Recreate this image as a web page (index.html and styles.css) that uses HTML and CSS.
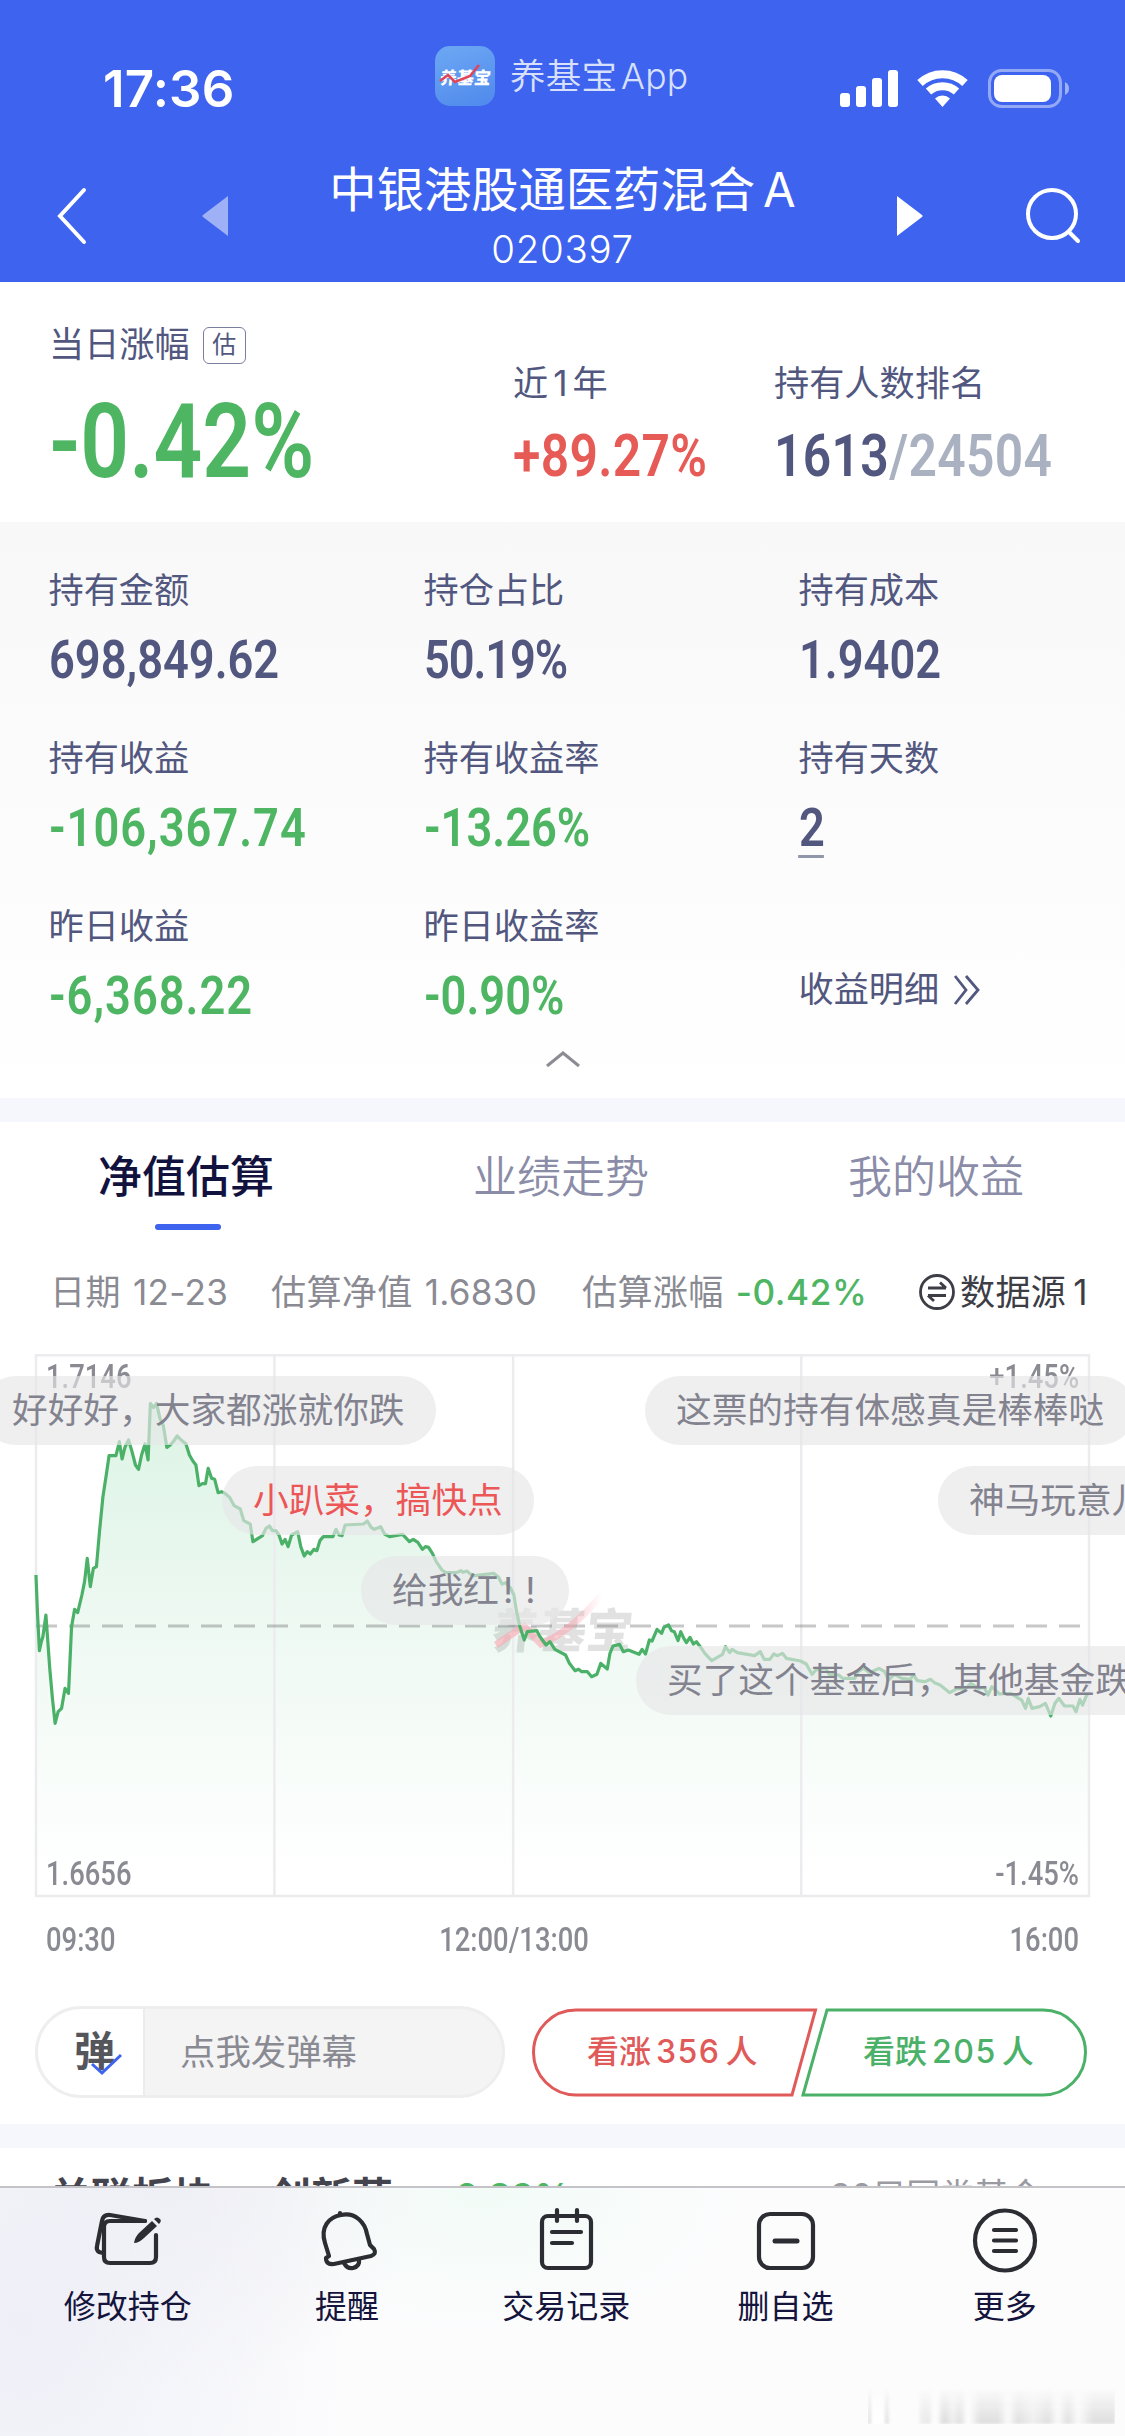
FILE: index.html
```html
<!DOCTYPE html>
<html lang="zh-CN">
<head>
<meta charset="utf-8">
<title>中银港股通医药混合A</title>
<link rel="stylesheet" href="styles.css">
</head>
<body>
<div class="app">
  <header class="header">
    <div class="status">
      <div class="time">17:36</div>
      <div class="brand">
        <div class="logo"><span>养基宝</span>
          <svg viewBox="0 0 60 60"><path d="M5 35 L13 29 L20 36 L35 30 L44 19" fill="none" stroke="#e0455a" stroke-width="2.6"/></svg>
        </div>
        <span class="brand-name">养基宝<i>App</i></span>
      </div>
      <svg class="signals" viewBox="0 0 230 40">
        <g fill="#fff"><rect x="0" y="24" width="10" height="14" rx="3"/><rect x="16" y="17" width="10" height="21" rx="3"/><rect x="32" y="9" width="10" height="29" rx="3"/><rect x="48" y="1" width="10" height="37" rx="3"/></g>
        <g fill="none" stroke="#fff" stroke-width="8"><path d="M80 14 A33 33 0 0 1 125 14"/><path d="M88.500 22.500 A21 21 0 0 1 116.500 22.500"/></g>
        <path d="M95 29.500 A11 11 0 0 1 110 29.500 L102.500 38 Z" fill="#fff"/>
        <rect x="149.500" y="1.500" width="71" height="36" rx="12" fill="none" stroke="#fff" stroke-opacity=".45" stroke-width="3"/>
        <rect x="154" y="6" width="57" height="27" rx="8" fill="#fff"/>
        <path d="M225 13 q4 2 4 6.500 q0 4.500 -4 6.500z" fill="#fff" fill-opacity=".5"/>
      </svg>
    </div>
    <div class="nav">
      <svg class="back" viewBox="0 0 34 58"><path d="M29 3 L5 29 L29 55" fill="none" stroke="#fff" stroke-width="4" stroke-linecap="round"/></svg>
      <svg class="prev" viewBox="0 0 28 42"><path d="M27 1 V41 L2 22 Q0.500 21 2 20Z" fill="#fff" opacity=".5"/></svg>
      <div class="title"><h1>中银港股通医药混合<b>A</b></h1><p>020397</p></div>
      <svg class="next" viewBox="0 0 28 42"><path d="M1 1 V41 L26 22 Q27.500 21 26 20Z" fill="#fff"/></svg>
      <svg class="search" viewBox="0 0 58 58"><g fill="none" stroke="#fff" stroke-width="4" stroke-linecap="round"><circle cx="27" cy="26" r="24"/><path d="M44 44 L53 53"/></g></svg>
    </div>
  </header>

  <section class="summary">
    <div class="today">
      <div class="label">当日涨幅<em>估</em></div>
      <div class="num big green">-0.42%</div>
    </div>
    <div class="year">
      <div class="label">近<i class="one">1</i>年</div>
      <div class="num mid red">+89.27%</div>
    </div>
    <div class="rank">
      <div class="label">持有人数排名</div>
      <div class="num mid">1613<span>/24504</span></div>
    </div>
  </section>

  <section class="holding">
    <div class="grid">
      <div><div class="label">持有金额</div><div class="num">698,849.62</div></div>
      <div><div class="label">持仓占比</div><div class="num tight">50.19%</div></div>
      <div><div class="label">持有成本</div><div class="num">1.9402</div></div>
      <div><div class="label">持有收益</div><div class="num wide green">-106,367.74</div></div>
      <div><div class="label">持有收益率</div><div class="num green">-13.26%</div></div>
      <div><div class="label">持有天数</div><div class="num days">2</div></div>
      <div><div class="label">昨日收益</div><div class="num wide green">-6,368.22</div></div>
      <div><div class="label">昨日收益率</div><div class="num green">-0.90%</div></div>
      <div class="detail">收益明细<svg viewBox="0 0 28 32"><path d="M2 2 L13 16 L2 30 M13 2 L25 16 L13 30" fill="none" stroke="#52577f" stroke-width="2.800"/></svg></div>
    </div>
    <svg class="fold" viewBox="0 0 36 20"><path d="M2 17 L18 4 L34 17" fill="none" stroke="#8c8c94" stroke-width="3"/></svg>
  </section>

  <section class="trend">
    <nav class="tabs"><span class="on">净值估算</span><span>业绩走势</span><span>我的收益</span></nav>
    <div class="info">
      <span class="i1">日期 12-23</span><span class="i2">估算净值 1.6830</span><span class="i3">估算涨幅 <b class="green">-0.42%</b></span>
      <span class="source"><svg viewBox="0 0 38 38"><g fill="none" stroke="#3d3d46" stroke-width="2.800"><circle cx="19" cy="19" r="16.500"/><path d="M10 15 H28 M22 9.500 L28 15 M28 22.500 H10 M10 22.500 L16 28"/></g></svg>数据源<i>1</i></span>
    </div>
    <div class="chart">
      <svg class="plot" viewBox="0 0 2940 1680" preserveAspectRatio="none">
        <defs><linearGradient id="area" x1="0" y1="190" x2="0" y2="1600" gradientUnits="userSpaceOnUse"><stop offset="0" stop-color="#dcf4e5"/><stop offset=".5" stop-color="#eff9f3"/><stop offset="1" stop-color="#fff"/></linearGradient></defs>
        <path class="fill" d="M94,1668 L94,705 98,820 103,932 108,905 112,890 120,825 130,985 137,1075 144,1150 152,1115 161,1105 170,1045 179,1060 187,860 195,808 203,818 214,765 221,725 228,655 236,740 244,685 252,680 260,575 269,470 277,410 285,347 303,347 312,305 319,357 327,320 336,300 345,335 354,375 362,388 370,345 379,312 387,360 393,190 401,203 409,190 418,235 427,258 436,322 445,315 454,303 463,288 472,298 486,312 495,345 504,363 512,375 520,437 529,431 537,431 544,385 553,415 561,418 570,458 579,455 588,460 600,472 612,497 628,507 637,542 654,552 661,605 686,587 695,565 704,558 712,572 721,572 729,585 737,612 745,598 753,620 762,585 778,575 786,620 795,648 803,635 811,642 820,628 828,632 836,602 845,590 870,590 878,568 886,585 894,587 902,555 950,552 960,543 970,562 978,568 995,560 1005,582 1018,590 1052,583 1070,605 1080,598 1092,607 1104,628 1112,620 1120,622 1130,640 1140,665 1155,690 1165,698 1195,697 1205,692 1210,697 1220,693 1230,703 1240,707 1290,700 1303,712 1312,732 1322,728 1335,745 1343,765 1350,815 1358,857 1370,900 1378,875 1403,872 1410,888 1427,915 1437,905 1450,928 1478,945 1488,970 1503,992 1512,988 1520,995 1535,995 1546,1010 1560,1003 1570,970 1587,987 1594,940 1602,918 1619,913 1629,935 1642,930 1670,943 1678,928 1687,942 1697,900 1704,903 1717,868 1729,880 1735,862 1747,855 1755,872 1762,875 1772,902 1779,875 1787,895 1794,908 1803,892 1812,912 1820,905 1830,920 1842,940 1860,962 1888,943 1896,920 1907,938 1913,928 1927,938 1972,947 1987,935 1997,958 2012,958 2022,942 2032,947 2045,940 2055,955 2092,963 2107,972 2122,1003 2132,990 2157,985 2167,1003 2192,1005 2202,1015 2234,1015 2242,995 2257,985 2272,998 2297,985 2312,995 2322,1020 2337,1003 2357,1015 2379,1018 2387,1003 2397,1022 2417,1025 2432,1018 2442,1028 2457,1035 2482,1058 2502,1045 2522,1048 2537,1030 2557,1045 2572,1042 2582,1065 2592,1040 2612,1062 2642,1060 2662,1075 2670,1080 2680,1105 2687,1075 2697,1105 2717,1100 2732,1090 2746,1128 2757,1090 2767,1075 2782,1098 2804,1098 2812,1115 2822,1078 2829,1095 2842,1060 L2846,1668 Z" fill="url(#area)"/>
        <g class="axes"><path d="M94,46 H2846 V1668 H94 Z M717,46 V1668 M1341,46 V1668 M2094,46 V1668"/></g>
      </svg>
      <svg class="plot" viewBox="0 0 1125 560"><path d="M36 286 H1082" stroke="#555" stroke-opacity=".32" stroke-width="2.800" stroke-dasharray="21 12"/></svg>
      <div class="watermark">养基宝</div>
      <svg class="plot" viewBox="0 0 1125 560"><defs><linearGradient id="arrow" x1="0" x2="1"><stop offset="0" stop-color="#f9a9b3" stop-opacity=".65"/><stop offset=".7" stop-color="#f9a9b3" stop-opacity=".55"/><stop offset="1" stop-color="#f9a9b3" stop-opacity="0"/></linearGradient></defs><path d="M496 305 L524 286 L541 304 Q570 292 602 255" fill="none" stroke="url(#arrow)" stroke-width="7"/></svg>
      <svg class="plot" viewBox="0 0 2940 1680" preserveAspectRatio="none">
        <path class="line" d="M94,705 L98,820 103,932 108,905 112,890 120,825 130,985 137,1075 144,1150 152,1115 161,1105 170,1045 179,1060 187,860 195,808 203,818 214,765 221,725 228,655 236,740 244,685 252,680 260,575 269,470 277,410 285,347 303,347 312,305 319,357 327,320 336,300 345,335 354,375 362,388 370,345 379,312 387,360 393,190 401,203 409,190 418,235 427,258 436,322 445,315 454,303 463,288 472,298 486,312 495,345 504,363 512,375 520,437 529,431 537,431 544,385 553,415 561,418 570,458 579,455 588,460 600,472 612,497 628,507 637,542 654,552 661,605 686,587 695,565 704,558 712,572 721,572 729,585 737,612 745,598 753,620 762,585 778,575 786,620 795,648 803,635 811,642 820,628 828,632 836,602 845,590 870,590 878,568 886,585 894,587 902,555 950,552 960,543 970,562 978,568 995,560 1005,582 1018,590 1052,583 1070,605 1080,598 1092,607 1104,628 1112,620 1120,622 1130,640 1140,665 1155,690 1165,698 1195,697 1205,692 1210,697 1220,693 1230,703 1240,707 1290,700 1303,712 1312,732 1322,728 1335,745 1343,765 1350,815 1358,857 1370,900 1378,875 1403,872 1410,888 1427,915 1437,905 1450,928 1478,945 1488,970 1503,992 1512,988 1520,995 1535,995 1546,1010 1560,1003 1570,970 1587,987 1594,940 1602,918 1619,913 1629,935 1642,930 1670,943 1678,928 1687,942 1697,900 1704,903 1717,868 1729,880 1735,862 1747,855 1755,872 1762,875 1772,902 1779,875 1787,895 1794,908 1803,892 1812,912 1820,905 1830,920 1842,940 1860,962 1888,943 1896,920 1907,938 1913,928 1927,938 1972,947 1987,935 1997,958 2012,958 2022,942 2032,947 2045,940 2055,955 2092,963 2107,972 2122,1003 2132,990 2157,985 2167,1003 2192,1005 2202,1015 2234,1015 2242,995 2257,985 2272,998 2297,985 2312,995 2322,1020 2337,1003 2357,1015 2379,1018 2387,1003 2397,1022 2417,1025 2432,1018 2442,1028 2457,1035 2482,1058 2502,1045 2522,1048 2537,1030 2557,1045 2572,1042 2582,1065 2592,1040 2612,1062 2642,1060 2662,1075 2670,1080 2680,1105 2687,1075 2697,1105 2717,1100 2732,1090 2746,1128 2757,1090 2767,1075 2782,1098 2804,1098 2812,1115 2822,1078 2829,1095 2842,1060"/>
      </svg>
      <div class="scale"><span class="axis">1.7146</span><span class="axis end">+1.45%</span></div>
      <div class="scale low"><span class="axis">1.6656</span><span class="axis end">-1.45%</span></div>
      <div class="bullet b1">好好好，大家都涨就你跌</div>
      <div class="bullet b2">这票的持有体感真是棒棒哒</div>
      <div class="bullet b3 red">小趴菜，搞快点</div>
      <div class="bullet b4">神马玩意儿</div>
      <div class="bullet b5">给我红<i>!!</i></div>
      <div class="bullet b6">买了这个基金后，其他基金跌</div>
    </div>
    <div class="times"><span class="axis">09:30</span><span class="axis center">12:00/13:00</span><span class="axis end">16:00</span></div>
    <div class="actions">
      <div class="send"><div class="toggle">弹<svg viewBox="0 0 34 24"><path d="M2 12 L12 21 L31 3" fill="none" stroke="#3d63ef" stroke-width="3"/></svg></div><div class="field">点我发弹幕</div></div>
      <div class="vote">
        <svg viewBox="0 0 560 92"><g fill="#fff" stroke-width="3"><path d="M45 3 H284.500 L261 88 H45 A42.500 42.500 0 0 1 45 3Z" stroke="#df5a59"/><path d="M296 3 H512 A42.500 42.500 0 0 1 512 88 H272 Z" stroke="#4bb168"/></g></svg>
        <span class="up">看涨<i>356</i>人</span><span class="down">看跌<i>205</i>人</span>
      </div>
    </div>
  </section>

  <section class="sector"><b>关联板块</b><b class="name">创新药</b><span class="pct green">0.89%</span><span class="more">30只同类基金 ›</span></section>

  <footer class="toolbar">
    <div class="tool"><svg viewBox="0 0 80 70"><g class="ink"><path d="M57 20 H22 Q16 20 16 26 V56 Q16 62 22 62 H62 Q68 62 68 56 V34"/><path d="M15 52 L11 51 Q8 49 9 45 L14 20 Q15 13.500 22 14 L57 20"/></g><path d="M46 42 Q47 36 51 32 L64 20 L69 25 L56 37 Q51 42 46 42Z M66 18 Q69 15 72 18 Q74 20 71 23Z" fill="#2b2d33"/></svg>修改持仓</div>
    <div class="tool"><svg viewBox="0 0 80 70"><g class="ink"><path d="M22 55 L18 42 C13 26 22 16 34 14 C49 11 58 22 60 33 L63 44 L67 48 Q70 53 64 55 L27 63 Q19 64 19 57 Z"/><path d="M37 62 Q40 68 46 67 Q53 65 52 59 M33 13 V12"/></g></svg>提醒</div>
    <div class="tool"><svg viewBox="0 0 80 70"><g class="ink"><rect x="16" y="15" width="49" height="52" rx="6"/><path d="M31 9 V20 M51 9 V20 M26 31 H55 M26 42 H46"/></g></svg>交易记录</div>
    <div class="tool"><svg viewBox="0 0 80 70"><g class="ink"><rect x="13" y="13" width="54" height="54" rx="11"/><path d="M29 40 H51" stroke-width="5"/></g></svg>删自选</div>
    <div class="tool"><svg viewBox="0 0 80 70"><g class="ink"><circle cx="40" cy="39.500" r="30"/><path d="M29 29 H51 M29 39.500 H51 M29 50 H51"/></g></svg>更多</div>
    <div class="smudge"></div>
  </footer>
</div>
</body>
</html>
```
FILE: styles.css
```css
* { box-sizing: border-box; }
body { margin: 0; background: #fff; }
i, em { font-style: normal; }
svg { display: block; overflow: visible; }
.app {
  width: 1125px; height: 2436px; overflow: hidden;
  display: flex; flex-direction: column; position: relative;
  font-family: Inter, "Noto Sans CJK SC", sans-serif;
  color: #52577f; background: #fff;
}
.green { color: #4eb563; }
.red { color: #e75b57; }

/* header */
.header { height: 282px; background: #3d63ef; color: #fff; flex: none; }
.status { height: 150px; display: flex; align-items: flex-start; }
.time { width: 332px; margin: 58px 0 0 103px; font-size: 51px; line-height: 62px; font-weight: 600; letter-spacing: .2px; }
.brand { width: 405px; margin-top: 45px; display: flex; align-items: center; gap: 15px; }
.logo { width: 60px; height: 60px; border-radius: 15px; background: linear-gradient(160deg, #6da8f4, #4f89ec); position: relative; display: flex; align-items: center; justify-content: center; }
.logo span { font-size: 17px; font-weight: 900; white-space: nowrap; transform: skewX(-6deg); }
.logo svg { position: absolute; inset: 0; }
.brand-name { font-size: 35.500px; line-height: 60px; font-weight: 350; color: #d8e0fc; white-space: nowrap; padding-top: 2px; letter-spacing: .2px; }
.brand-name i { margin-left: 4px; }
.signals { width: 230px; height: 40px; margin-top: 69px; }
.nav { height: 132px; display: flex; align-items: flex-start; }
.back { width: 34px; height: 58px; margin: 37px 0 0 55px; }
.prev { width: 28px; height: 42px; margin: 45px 0 0 112px; }
.title { width: 667px; text-align: center; padding-top: 10px; }
.title h1 { margin: 0; font-size: 47.300px; line-height: 60px; font-weight: 400; white-space: nowrap; }
.title h1 b { font-weight: 400; margin-left: 8px; }
.title p { margin: 9px 0 0; font-size: 38.500px; line-height: 40px; font-weight: 350; letter-spacing: .7px; }
.next { width: 28px; height: 42px; margin: 45px 0 0; }
.search { width: 58px; height: 58px; margin: 38px 0 0 101px; }

/* text pieces */
.label { font-size: 35.200px; line-height: 44px; white-space: nowrap; }
.num { font-family: Roboto, sans-serif; font-weight: 600; font-size: 54.500px; line-height: 60px; white-space: nowrap; width: max-content; transform: scaleX(.83); transform-origin: 0 50%; }
.num.wide { letter-spacing: 1.200px; }
.num.tight { letter-spacing: -1.300px; }
.num.mid { font-size: 60px; letter-spacing: .4px; }
.num.big { font-size: 103px; line-height: 110px; }

.summary { height: 240px; display: grid; grid-template-columns: 464px 261px 1fr; padding-left: 49px; flex: none; }
.today { padding-top: 40px; }
.label em { display: inline-block; width: 43px; height: 37px; line-height: 34px; margin-left: 13px; border: 1.500px solid #7a7e9f; border-radius: 6px; font-size: 24px; text-align: center; vertical-align: 4px; }
.today .label { height: 44px; }
.today .num { margin-top: 21px; }
.year, .rank { padding-top: 79px; }
.year .num, .rank .num { margin-top: 21px; }
.one { margin: 0 5px; }
.rank span { color: #aab1c0; }

.holding { height: 576px; background: linear-gradient(#f8f8f8, #fff); flex: none; }
.grid { display: grid; grid-template-columns: 375px 375px 1fr; grid-auto-rows: 168px; padding: 46px 0 0 48.500px; }
.grid .num { margin-top: 17px; }
.grid .days { position: relative; }
.days::after { content: ""; position: absolute; left: -1px; width: 31px; top: 58px; height: 3px; background: #9197ab; }
.detail { font-size: 35.200px; line-height: 44px; padding-top: 63px; display: flex; gap: 14px; }
.detail svg { width: 28px; height: 32px; margin-top: 7px; }
.fold { width: 36px; height: 20px; margin: -23px auto 0; }

/* trend */
.trend { border-top: 24px solid #f6f7fc; height: 1026px; flex: none; }
.tabs { height: 108px; padding-top: 25px; display: grid; grid-template-columns: repeat(3, 375px); text-align: center; font-size: 44px; line-height: 60px; color: #8b8ca8; font-weight: 350; }
.tabs span { position: relative; padding-right: 3px; }
.tabs .on { font-weight: 500; color: #12123f; }
.on::after { content: ""; position: absolute; left: 155px; top: 77px; width: 66px; height: 6px; border-radius: 3px; background: #3d63ef; }
.info { height: 125px; padding: 39px 0 0 50px; display: flex; align-items: flex-start; font-size: 35.100px; line-height: 46px; color: #8a8a93; white-space: nowrap; letter-spacing: .3px; word-spacing: 2px; }
.i1 { width: 221px; }
.i2 { width: 311px; }
.i3 { width: 336px; }
.info b { font-weight: 500; letter-spacing: .6px; }
.source { display: flex; align-items: center; color: #3d3d46; gap: 4px; }
.source i { margin-left: 3px; }
.source svg { width: 38px; height: 38px; }

.chart { position: relative; height: 560px; overflow: hidden; margin-top: -15px; display: flex; flex-direction: column; justify-content: space-between; padding: 18px 46px 7px; }
.plot { position: absolute; left: 0; top: 0; width: 1125px; height: 560px; }
.axes path { fill: none; stroke: #ececef; stroke-width: 2.500px; vector-effect: non-scaling-stroke; }
.line { fill: none; stroke: #4bb168; stroke-width: 3.200px; stroke-linejoin: round; vector-effect: non-scaling-stroke; }
.scale { display: flex; justify-content: space-between; }
.axis { font-family: Roboto, sans-serif; font-size: 33px; line-height: 38px; font-weight: 500; color: #8a8a93; transform: scaleX(.83); transform-origin: 0 50%; }
.axis.end { transform-origin: 100% 50%; text-align: right; }
.axis.center { transform-origin: 50% 50%; text-align: center; }
.watermark { position: absolute; left: 492px; top: 256px; font-size: 47px; line-height: 70px; font-weight: 900; color: #555; opacity: .17; transform: skewX(-6deg); }
.bullet { position: absolute; height: 69px; line-height: 69px; padding: 0 31px; border-radius: 35px; background: rgba(231, 231, 232, .65); font-size: 35.700px; color: #83838f; white-space: nowrap; }
.bullet.red { color: #ec5656; }
.b1, .b2 { top: 36px; }
.b3, .b4 { top: 126px; }
.b5 { top: 216px; }
.b6 { top: 306px; }
.b1 { left: -19px; }
.b2 { left: 645px; }
.b3 { left: 222px; }
.b4 { left: 938px; }
.b5 { left: 361px; width: 208px; }
.b5 i { letter-spacing: 12px; margin-left: 4px; }
.b6 { left: 636px; }

.times { padding: 21px 46px 0; height: 106px; display: grid; grid-template-columns: 331px 274px 1fr; }
.actions { display: flex; padding-left: 35px; gap: 26px; }
.send { width: 470px; height: 92px; border: 3px solid #eeeeef; border-radius: 46px; display: flex; overflow: hidden; background: #f4f4f5; }
.toggle { width: 107px; border-right: 2px solid #ececed; background: #fff; font-size: 41px; font-weight: 700; line-height: 84px; padding-left: 36px; color: #55555c; position: relative; }
.toggle svg { position: absolute; left: 52px; top: 43px; width: 34px; height: 24px; }
.field { padding-left: 35px; font-size: 35.400px; line-height: 87px; color: #8a8a93; }
.vote { position: relative; width: 560px; height: 92px; display: flex; font-size: 32px; line-height: 91px; font-weight: 500; white-space: nowrap; }
.vote svg { position: absolute; left: 0; top: 1px; width: 560px; height: 92px; }
.vote span { position: relative; }
.vote i { letter-spacing: 1.500px; margin: 0 5px; }
.up { padding-left: 56px; width: 332px; color: #df5a59; }
.down { color: #4bb168; }

.sector { border-top: 24px solid #f6f7fc; height: 312px; flex: none; padding: 21px 60px 0 50px; display: flex; font-size: 41px; line-height: 57px; color: #44444e; white-space: nowrap; }
.sector b { font-weight: 700; }
.sector .name { margin-left: 56px; width: 185px; }
.sector .pct { font-size: 36px; font-weight: 600; line-height: 54px; }
.sector .more { margin-left: auto; font-size: 34px; line-height: 54px; color: #9a9aa2; }

/* toolbar overlaps the scrolled content */
.toolbar {
  position: absolute; left: 0; bottom: 0; width: 1125px; height: 250px; border-top: 2px solid #c3c3c8;
  background: radial-gradient(ellipse 330px 420px at 2% 55%, #eeeff7, #f1f1f600), radial-gradient(ellipse 260px 200px at 15% 0, #efeff4, #f3f3f600), radial-gradient(ellipse 260px 150px at 43% 0, #f2fbf7, #f6fbf900), #fcfcfd;
  padding: 14px 11px 0 18px; display: grid; grid-template-columns: repeat(5, 219.300px);
}
.tool { display: flex; flex-direction: column; align-items: center; font-size: 32px; line-height: 44px; color: #14143c; }
.tool svg { width: 80px; height: 70px; margin: -1px 0 14px; }
.ink { fill: none; stroke: #2b2d33; stroke-width: 4.200px; stroke-linecap: round; stroke-linejoin: round; }
.smudge {
  position: absolute; left: 868px; bottom: 12px; width: 247px; height: 36px; filter: blur(1.500px);
  background: linear-gradient(90deg, #ddd 0 3px, #fff 3px 17px, #ddd 17px 20px, transparent 21px 50px, #e9e9e9 54px 62px, transparent 64px 70px, #ddd 74px 79px, #eee 84px, #ddd 92px, #fff 100px, #ddd 112px 130px, #fafafa 140px, #ddd 150px, #eee 165px, #ddd 180px, #fafafa 190px, #ddd 200px, #fafafa 210px, #ddd 225px 247px);
  -webkit-mask: linear-gradient(transparent, #000); mask: linear-gradient(transparent, #000);
}
```
